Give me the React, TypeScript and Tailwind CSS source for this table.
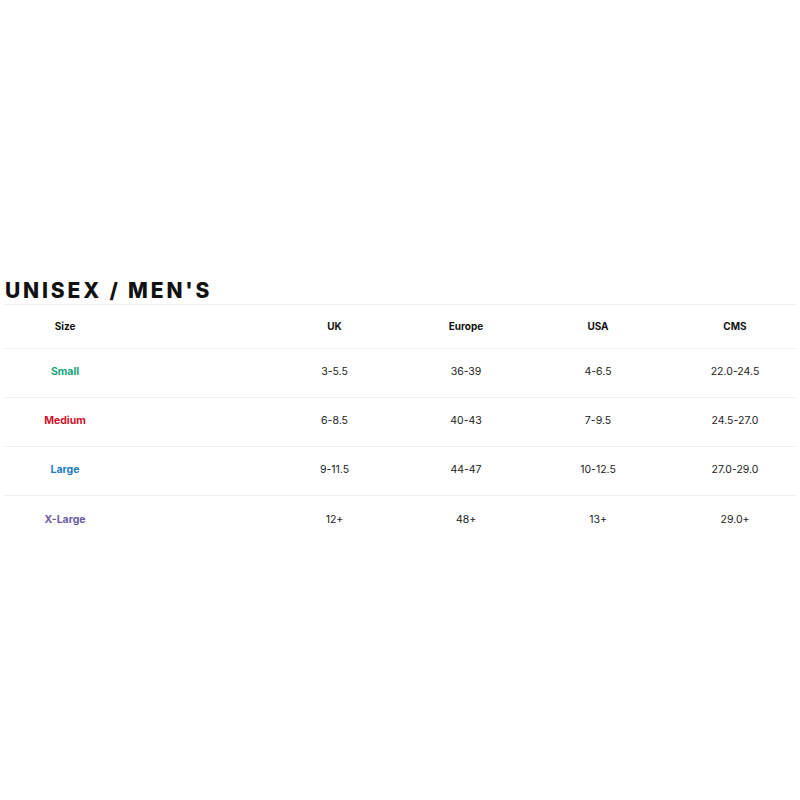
import React from "react";

const rows = [
  { size: "Small", color: "text-[#15a37a]", uk: "3-5.5", eu: "36-39", us: "4-6.5", cms: "22.0-24.5" },
  { size: "Medium", color: "text-[#d3102c]", uk: "6-8.5", eu: "40-43", us: "7-9.5", cms: "24.5-27.0" },
  { size: "Large", color: "text-[#1a7cc6]", uk: "9-11.5", eu: "44-47", us: "10-12.5", cms: "27.0-29.0" },
  { size: "X-Large", color: "text-[#6b5ba8]", uk: "12+", eu: "48+", us: "13+", cms: "29.0+" },
];

const grid = "grid grid-cols-[122px_142px_133px_130px_134px_131px] items-center";

export default function App() {
  return (
    <div className="w-[800px] h-[800px] bg-white pt-[278px] px-[4px]" style={{ fontFamily: "Inter, 'Noto Sans', sans-serif" }}>
      <h1 className="pl-[1px] text-[21px] leading-[26px] font-extrabold tracking-[0.135em] text-[#111]">UNISEX / MEN'S</h1>
      <div className="border-t border-[#f0f0f0]">
        <div className={`${grid} h-[44px] border-b border-[#f0f0f0] text-[10px] font-bold text-[#111]`}>
          <div className="text-center">Size</div>
          <div />
          <div className="text-center">UK</div>
          <div className="text-center">Europe</div>
          <div className="text-center">USA</div>
          <div className="text-center pl-[9px]">CMS</div>
        </div>
        {rows.map((r, i) => (
          <div
            key={r.size}
            className={`${grid} h-[49px] pb-[2px] text-[10.5px] text-[#222] ${i < rows.length - 1 ? "border-b border-[#f0f0f0]" : ""}`}
          >
            <div className={`text-center font-bold ${r.color}`}>{r.size}</div>
            <div />
            <div className="text-center">{r.uk}</div>
            <div className="text-center">{r.eu}</div>
            <div className="text-center">{r.us}</div>
            <div className="text-center pl-[9px]">{r.cms}</div>
          </div>
        ))}
      </div>
    </div>
  );
}
